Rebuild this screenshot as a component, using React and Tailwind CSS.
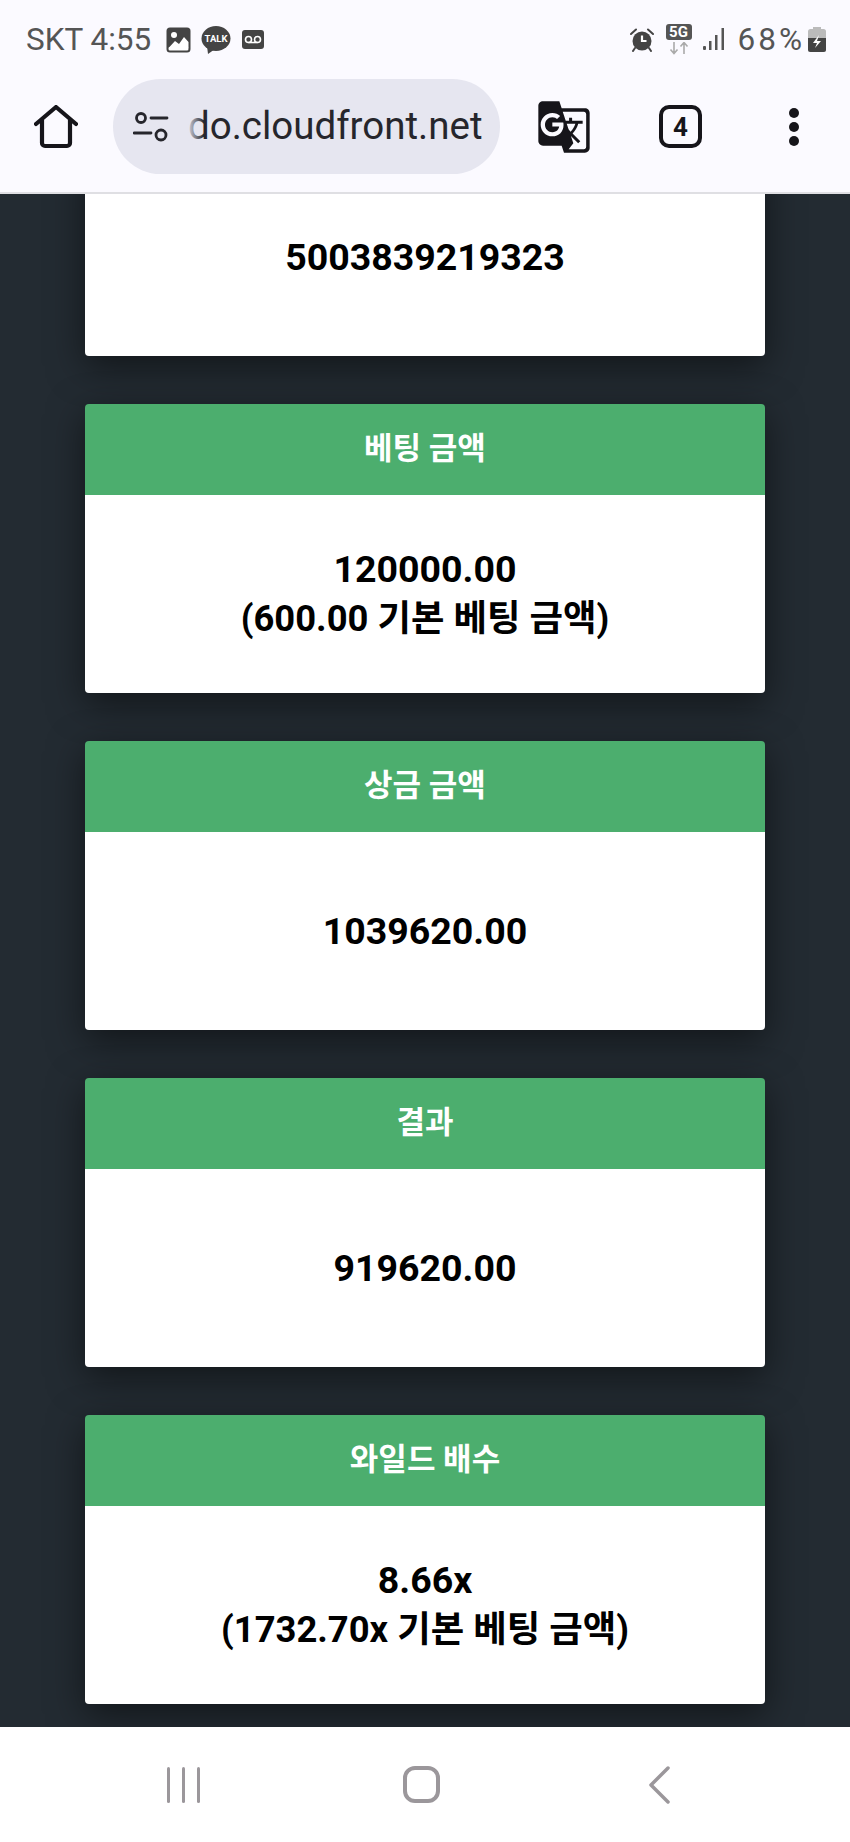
import { MdGTranslate } from "react-icons/md";

const cards = [
  { title: "베팅 금액", lines: ["120000.00"], note: "(600.00 기본 베팅 금액)" },
  { title: "상금 금액", lines: ["1039620.00"] },
  { title: "결과", lines: ["919620.00"] },
  { title: "와일드 배수", lines: ["8.66x"], note: "(1732.70x 기본 베팅 금액)" },
];

const ImageIcon = () => (
  <svg width="25" height="26" viewBox="0 0 25 26" className="ml-[15px]">
    <rect x="0.5" y="0.5" width="24" height="25" rx="3.5" fill="#444" />
    <rect x="2.5" y="20" width="20" height="3.5" rx="1.5" fill="#fff" />
    <circle cx="8" cy="8" r="3" fill="#fff" />
    <path d="M2.5 21 L9 14 L13 17 L18 10 L22.5 15 V21 Z" fill="#fff" />
  </svg>
);

const TalkIcon = () => (
  <svg width="30" height="28" viewBox="0 0 30 28" className="ml-[10px]">
    <ellipse cx="15" cy="12.5" rx="14.5" ry="12.5" fill="#444" />
    <path d="M6 20 L7 28 L14 23 Z" fill="#444" />
    <text x="15" y="16" textAnchor="middle" fontSize="9.5" fontWeight="700" fill="#fff" fontFamily="Roboto, sans-serif">
      TALK
    </text>
  </svg>
);

const VoicemailIcon = () => (
  <svg width="22" height="19" viewBox="0 0 22 19" className="ml-[11px]">
    <rect width="22" height="19" rx="3" fill="#444" />
    <circle cx="6.5" cy="9.5" r="3" fill="none" stroke="#fff" strokeWidth="1.6" />
    <circle cx="15.5" cy="9.5" r="3" fill="none" stroke="#fff" strokeWidth="1.6" />
    <path d="M6.5 12.5 H15.5" stroke="#fff" strokeWidth="1.6" />
  </svg>
);

const AlarmIcon = () => (
  <svg width="24" height="24" viewBox="0 0 24 24">
    <circle cx="12" cy="13" r="9.5" fill="#444" />
    <path d="M1 6 L6 1.5 M23 6 L18 1.5 M5 20 L3 23 M19 20 L21 23" stroke="#444" strokeWidth="2" strokeLinecap="round" />
    <path d="M12 7.5 V13 H16.5" fill="none" stroke="#fff" strokeWidth="2.2" />
  </svg>
);

const FiveGIcon = () => (
  <div className="ml-[12px] flex h-[31px] w-[26px] flex-col items-center">
    <div className="flex h-[16px] w-[26px] items-center justify-center rounded-[3px] bg-[#555] text-[15px] font-bold leading-none text-white">
      5G
    </div>
    <svg width="20" height="13" viewBox="0 0 20 13" className="mt-[2px]">
      <path d="M5 0 V11 M1.5 7.5 L5 11.5 L8.5 7.5 M15 12 V1 M11.5 4.5 L15 0.5 L18.5 4.5" fill="none" stroke="#aaa" strokeWidth="1.6" />
    </svg>
  </div>
);

const SignalIcon = () => (
  <svg width="22" height="23" viewBox="0 0 22 23" className="ml-[11px]">
    <rect x="0" y="18" width="3" height="4" rx="1" fill="#555" />
    <rect x="6" y="13" width="2.5" height="9" fill="#555" />
    <rect x="12" y="7" width="2.5" height="15" fill="#555" />
    <rect x="18.5" y="0" width="2.5" height="22" fill="#555" />
  </svg>
);

const BatteryIcon = () => (
  <svg width="18" height="25" viewBox="0 0 18 25" className="ml-[3px]">
    <rect x="5" y="0" width="8" height="3" fill="#bbb" />
    <rect x="0" y="2" width="18" height="23" rx="2.5" fill="#bbb" />
    <path d="M0 11 H18 V22.5 A2.5 2.5 0 0 1 15.5 25 H2.5 A2.5 2.5 0 0 1 0 22.5 Z" fill="#444" />
    <path d="M11 8 L5 16 H9 L7 21 L13 14 H9 Z" fill="#fff" />
  </svg>
);

const HomeIcon = () => (
  <svg width="44" height="44" viewBox="0 0 44 44">
    <path
      d="M2 19 L22 2 L42 19 M8 15 V38 A3 3 0 0 0 11 41 H33 A3 3 0 0 0 36 38 V15"
      fill="none"
      stroke="#16151a"
      strokeWidth="4.2"
      strokeLinecap="round"
      strokeLinejoin="round"
    />
  </svg>
);

const TuneIcon = () => (
  <svg width="37" height="30" viewBox="0 0 37 30">
    <circle cx="8" cy="6" r="4.5" fill="none" stroke="#26262c" strokeWidth="2.8" />
    <path d="M18 6 H34 M1 21 H18" stroke="#26262c" strokeWidth="2.8" strokeLinecap="round" />
    <circle cx="28" cy="23" r="5" fill="none" stroke="#26262c" strokeWidth="2.8" />
  </svg>
);

const TopBars = () => (
  <header className="h-[194px] shrink-0 border-b-2 border-[#dfdfe3] bg-[#fbfaff]">
    {/* status bar */}
    <div className="flex h-[79px] items-center justify-between pl-[26px] pr-[24px] text-[#555]">
      <div className="flex items-center">
        <span className="text-[31.5px] leading-none">SKT 4:55</span>
        <ImageIcon />
        <TalkIcon />
        <VoicemailIcon />
      </div>
      <div className="flex items-center">
        <AlarmIcon />
        <FiveGIcon />
        <SignalIcon />
        <span className="ml-[13px] text-[31.5px] leading-none tracking-[3px]">68%</span>
        <BatteryIcon />
      </div>
    </div>

    {/* address bar */}
    <div className="flex h-[95px] items-center">
      <div className="ml-[34px] mr-[35px] flex">
        <HomeIcon />
      </div>
      <div className="flex h-[95px] w-[387px] items-center rounded-full bg-[#e6e6f0] pl-[20px]">
        <TuneIcon />
        <div className="relative ml-[16px] w-[305px] whitespace-nowrap text-[38.5px] leading-none text-[#26262c]">
          <span className="pl-[2px]">do.cloudfront.net</span>
          <div className="absolute inset-y-0 left-0 w-[18px] bg-gradient-to-r from-[#e6e6f0] to-transparent" />
        </div>
      </div>
      <div className="ml-[36px] flex">
        <MdGTranslate size={56} color="#16151a" />
      </div>
      <div className="ml-[67px] flex h-[43px] w-[43px] items-center justify-center rounded-[10px] border-[4px] border-[#16151a] text-[26px] font-bold leading-none text-[#16151a]">
        4
      </div>
      <div className="ml-[87px] flex flex-col gap-[4px]">
        <span className="h-[10px] w-[10px] rounded-full bg-[#16151a]" />
        <span className="h-[10px] w-[10px] rounded-full bg-[#16151a]" />
        <span className="h-[10px] w-[10px] rounded-full bg-[#16151a]" />
      </div>
    </div>
  </header>
);

const Card = ({ title, lines, note }) => (
  <div className="mt-[48px] overflow-hidden rounded-[4px] shadow-[0_10px_36px_rgba(0,0,0,0.5)]">
    <div className="flex h-[91px] items-center justify-center bg-[#4cae6e] text-[31px] font-bold text-white">
      {title}
    </div>
    <div className="flex h-[198px] flex-col items-center justify-center bg-white text-[37.5px] font-bold leading-[50px] text-black">
      {lines.map((line) => (
        <div key={line}>{line}</div>
      ))}
      {note && <div className="text-[36.4px]">{note}</div>}
    </div>
  </div>
);

const BottomNav = () => (
  <footer className="flex h-[115px] shrink-0 items-center bg-white">
    <div className="ml-[167px] flex gap-[12px]">
      <span className="h-[36px] w-[3px] rounded-full bg-[#9b979b]" />
      <span className="h-[36px] w-[3px] rounded-full bg-[#9b979b]" />
      <span className="h-[36px] w-[3px] rounded-full bg-[#9b979b]" />
    </div>
    <div className="ml-[203px] h-[37px] w-[37px] rounded-[12px] border-[4px] border-[#9b979b]" />
    <svg width="22" height="38" viewBox="0 0 22 38" className="ml-[208px]">
      <path d="M20 2 L3 19 L20 36" fill="none" stroke="#9b979b" strokeWidth="3.5" strokeLinecap="round" strokeLinejoin="round" />
    </svg>
  </footer>
);

const App = () => {
  return (
    <div className="flex h-[1842px] w-[850px] flex-col overflow-hidden font-['Roboto','Noto_Sans_CJK_KR',sans-serif]">
      <TopBars />
      <main className="min-h-0 flex-1 overflow-hidden bg-[#232b32] px-[85px]">
        {/* first card is scrolled under the top bar */}
        <div className="-mt-[36px] flex h-[198px] items-center justify-center rounded-[4px] bg-white text-[37.5px] font-bold text-black shadow-[0_10px_36px_rgba(0,0,0,0.5)]">
          5003839219323
        </div>
        {cards.map((card) => (
          <Card key={card.title} title={card.title} lines={card.lines} note={card.note} />
        ))}
      </main>
      <BottomNav />
    </div>
  );
};

export default App;
